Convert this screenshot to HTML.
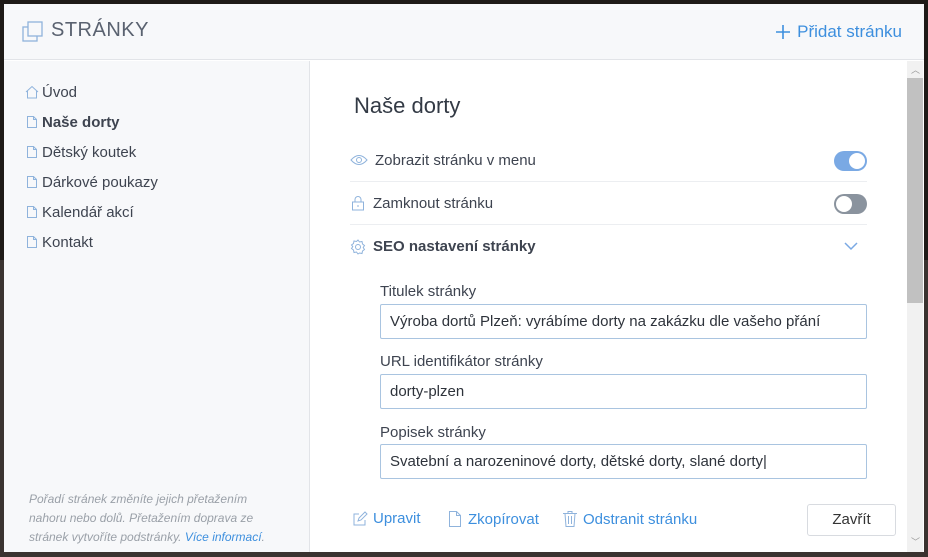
<!DOCTYPE html><html><head><meta charset="utf-8"><style>
*{box-sizing:border-box;margin:0;padding:0}
body{width:928px;height:557px;background:#1e1a17;font-family:"Liberation Sans",sans-serif;position:relative;overflow:hidden}
.bgimg{position:absolute;left:0;top:260px;width:928px;height:297px;background:#3a3330}
.m{position:absolute;left:4px;top:4px;width:920px;height:548px;background:#fff;overflow:hidden}
.hd{position:absolute;left:0;top:0;width:920px;height:56px;background:#f7f8fa;border-bottom:1px solid #e2e4e8}
.hd .t{position:absolute;left:47px;top:15px;font-size:20px;color:#5a6270;letter-spacing:.5px}
.hd .a{position:absolute;right:22px;top:16px;font-size:17px;color:#3d8fde;display:flex;align-items:center;gap:6px;height:24px}
.sb{position:absolute;left:0;top:57px;width:306px;height:491px;background:#f7f8fa;border-right:1px solid #e2e4e8}
.sb ul{list-style:none;position:absolute;left:21px;top:16px}
.sb li{height:30px;font-size:15px;color:#3e4450;display:flex;align-items:center;gap:3px}
.note{position:absolute;left:25px;top:429px;width:250px;font-size:12px;line-height:19px;color:#9aa0a8;font-style:italic}
.note span{color:#3d8fde}
.ct{position:absolute;left:306px;top:57px;width:597px;height:491px}
h1{position:absolute;left:44px;top:32px;font-size:22px;font-weight:normal;color:#333a45}
.row{position:absolute;left:40px;width:517px;height:43px;border-bottom:1px solid #eceef1;display:flex;align-items:center;font-size:15px;color:#3e4450}
.row svg{margin-right:7px}
.tg{position:absolute;right:0;top:12px;width:33px;height:20px;border-radius:10px}
.tg i{position:absolute;top:2px;width:16px;height:16px;border-radius:50%;background:#fff}
.lb{position:absolute;left:70px;font-size:15px;color:#3e4450}
.in{position:absolute;left:70px;width:487px;height:35px;border:1px solid #a9c4e0;border-radius:2px;font-size:15px;color:#2e333b;padding:8px 9px}
.act{position:absolute;top:449px;font-size:15px;color:#3d8fde;display:flex;align-items:center;gap:5px}
.btn{position:absolute;left:803px;top:500px;width:89px;height:32px;border:1px solid #d8dbe0;border-radius:3px;font-size:15px;color:#333;text-align:center;line-height:30px;background:#fff}
.scr{position:absolute;left:903px;top:57px;width:16px;height:491px;background:#f1f1f1}
.scr .th{position:absolute;left:0;top:17px;width:16px;height:225px;background:#c1c1c1}
.scr b{position:absolute;left:4px;font-size:9px;color:#999;font-weight:normal}
</style></head><body>
<div class="bgimg"></div>
<div class="m">
<div class="hd">
<svg style="position:absolute;left:18px;top:17px" width="22" height="22" viewBox="0 0 22 22" fill="none" stroke="#8fb3dc" stroke-width="1.3"><rect x="1" y="6" width="14" height="14"/><rect x="6" y="1" width="14" height="14" fill="#f7f8fa"/></svg>
<div class="t">STRÁNKY</div>
<div class="a"><svg width="16" height="16" viewBox="0 0 16 16" stroke="#3d8fde" stroke-width="1.6"><path d="M8 1v14M1 8h14"/></svg>Přidat stránku</div>
</div>
<div class="sb"><ul>
<li><svg width="14" height="14" viewBox="0 0 14 14" fill="none" stroke="#8fb3dc"><path d="M1 7L7 1.5 13 7M2.5 6v7h9V6"/></svg>Úvod</li>
<li><svg width="14" height="14" viewBox="0 0 14 14" fill="none" stroke="#8fb3dc"><path d="M2.5 1.5h6l3 3v8h-9z M8.5 1.5v3h3"/></svg><b>Naše dorty</b></li>
<li><svg width="14" height="14" viewBox="0 0 14 14" fill="none" stroke="#8fb3dc"><path d="M2.5 1.5h6l3 3v8h-9z M8.5 1.5v3h3"/></svg>Dětský koutek</li>
<li><svg width="14" height="14" viewBox="0 0 14 14" fill="none" stroke="#8fb3dc"><path d="M2.5 1.5h6l3 3v8h-9z M8.5 1.5v3h3"/></svg>Dárkové poukazy</li>
<li><svg width="14" height="14" viewBox="0 0 14 14" fill="none" stroke="#8fb3dc"><path d="M2.5 1.5h6l3 3v8h-9z M8.5 1.5v3h3"/></svg>Kalendář akcí</li>
<li><svg width="14" height="14" viewBox="0 0 14 14" fill="none" stroke="#8fb3dc"><path d="M2.5 1.5h6l3 3v8h-9z M8.5 1.5v3h3"/></svg>Kontakt</li>
</ul>
<div class="note">Pořadí stránek změníte jejich přetažením nahoru nebo dolů. Přetažením doprava ze stránek vytvoříte podstránky. <span>Více informací</span>.</div>
</div>
<div class="ct">
<h1>Naše dorty</h1>
<div class="row" style="top:78px"><svg width="18" height="12" viewBox="0 0 18 12" fill="none" stroke="#8fb3dc"><path d="M1 6Q9-3 17 6Q9 15 1 6z"/><circle cx="9" cy="6" r="2.5"/></svg>Zobrazit stránku v menu<div class="tg" style="background:#7aa9e4"><i style="right:2px"></i></div></div>
<div class="row" style="top:121px"><svg width="16" height="16" viewBox="0 0 16 16" fill="none" stroke="#8fb3dc"><rect x="2.5" y="7" width="11" height="8"/><path d="M5 7V4.5a3 3 0 0 1 6 0V7M8 10v2"/></svg>Zamknout stránku<div class="tg" style="background:#8a939e"><i style="left:2px"></i></div></div>
<div class="row" style="top:164px;border:none"><svg width="16" height="16" viewBox="0 0 16 16" fill="none" stroke="#8fb3dc"><circle cx="8" cy="8" r="2.5"/><path d="M8 1l1.5 2 2.5-.5.5 2.5 2 1.5-1.3 2 1.3 2-2 1.5-.5 2.5-2.5-.5L8 15l-1.5-2-2.5.5-.5-2.5-2-1.5 1.3-2L1.5 6l2-1.5.5-2.5 2.5.5z"/></svg><b>SEO nastavení stránky</b><svg style="position:absolute;right:2px" width="14" height="9" viewBox="0 0 14 9" fill="none" stroke="#7aa9e4" stroke-width="1.5"><path d="M1 1l6 6 6-6"/></svg></div>
<div class="lb" style="top:222px">Titulek stránky</div>
<div class="in" style="top:243px">Výroba dortů Plzeň: vyrábíme dorty na zakázku dle vašeho přání</div>
<div class="lb" style="top:292px">URL identifikátor stránky</div>
<div class="in" style="top:313px">dorty-plzen</div>
<div class="lb" style="top:363px">Popisek stránky</div>
<div class="in" style="top:383px">Svatební a narozeninové dorty, dětské dorty, slané dorty|</div>
<div class="act" style="left:42px"><svg width="16" height="16" viewBox="0 0 16 16" fill="none" stroke="#8fb3dc"><path d="M13 9v5H2V3h5M6 10l1-3 6-6 2 2-6 6z"/></svg>Upravit</div>
<div class="act" style="left:137px"><svg width="16" height="18" viewBox="0 0 16 18" fill="none" stroke="#8fb3dc"><path d="M2.5 1.5h7l4 4v11h-11z M9.5 1.5v4h4"/></svg>Zkopírovat</div>
<div class="act" style="left:252px"><svg width="16" height="18" viewBox="0 0 16 18" fill="none" stroke="#8fb3dc"><path d="M1 3.5h14M6 3.5V1.5h4v2M3 3.5l1 13h8l1-13M6.5 6v8M9.5 6v8"/></svg>Odstranit stránku</div>
</div>
<div class="btn">Zavřít</div>
<div class="scr"><b style="top:2px">︿</b><div class="th"></div><b style="top:474px">﹀</b></div>
</div>
</body></html>
